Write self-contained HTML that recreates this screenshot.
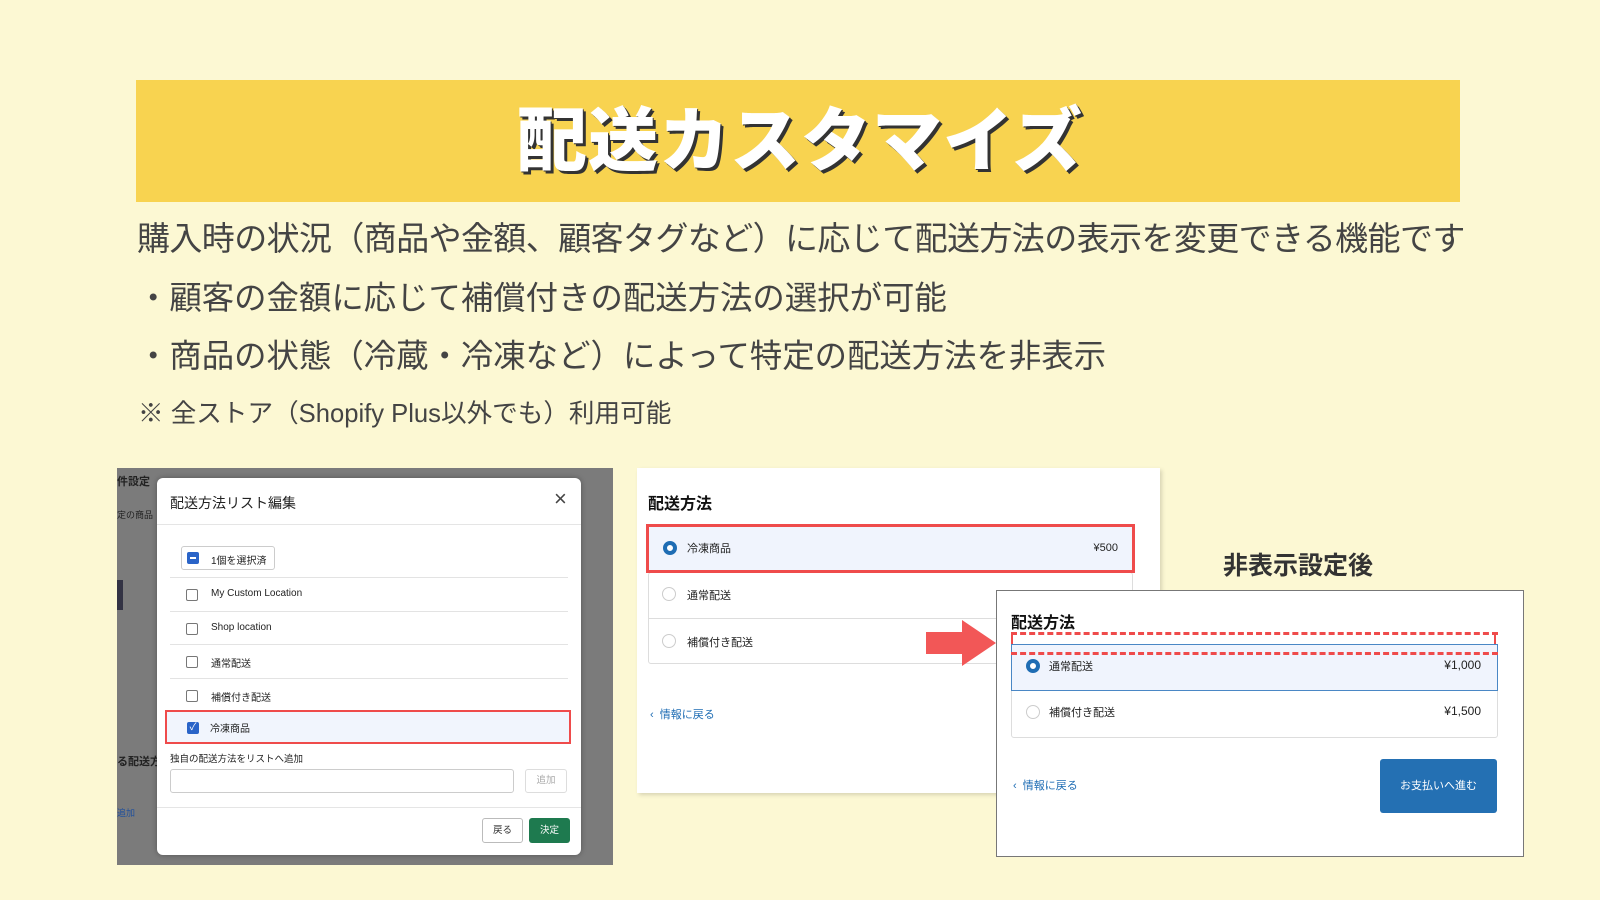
<!DOCTYPE html>
<html><head><meta charset="utf-8"><style>
*{margin:0;padding:0;box-sizing:border-box}
body{width:1600px;height:900px;background:#fcf8d3;position:relative;overflow:hidden;font-family:"Liberation Sans","Noto Sans CJK JP",sans-serif;color:#333}
.a{position:absolute;white-space:nowrap}
.band{left:136px;top:80px;width:1324px;height:122px;background:#f8d350}
.title{left:0;width:1600px;top:96px;text-align:center;font-size:70px;font-weight:900;color:#fff;text-shadow:3px 3px 0 #333,1px 1px 0 #333;letter-spacing:1px;line-height:90px}
.body{font-size:33px;color:#444;line-height:40px}
.cb{position:absolute;width:12px;height:12px;border:1.5px solid #777;border-radius:2px;background:#fff}
.row{position:absolute;left:170px;width:398px;height:34px;border-top:1px solid #e3e3e3;font-size:10px;color:#222}
.row span{position:absolute;left:41px;top:10px}
.row .cb{left:16px;top:11px}
.radio{position:absolute;width:14px;height:14px;border-radius:50%;border:1px solid #ccc;background:#fff}
.radio.on{border:4px solid #1f6db4}
.sm{font-size:11px;color:#222}
</style></head><body>
<div class="a band"></div>
<div class="a title">配送カスタマイズ</div>
<div class="a body" style="left:137px;top:219px;letter-spacing:-0.6px">購入時の状況（商品や金額、顧客タグなど）に応じて配送方法の表示を変更できる機能です</div>
<div class="a body" style="left:137px;top:278px;font-size:32.4px">・顧客の金額に応じて補償付きの配送方法の選択が可能</div>
<div class="a body" style="left:137px;top:336px;font-size:32.4px">・商品の状態（冷蔵・冷凍など）によって特定の配送方法を非表示</div>
<div class="a" style="left:138px;top:393px;font-size:25.6px;color:#444">※ 全ストア（Shopify Plus以外でも）利用可能</div>

<!-- left screenshot -->
<div class="a" style="left:117px;top:468px;width:496px;height:397px;background:#7b7b7b;overflow:hidden">
 <div class="a" style="left:0;top:5px;font-size:11px;font-weight:bold;color:#222">件設定</div>
 <div class="a" style="left:0;top:40px;font-size:9px;color:#222">定の商品</div>
 <div class="a" style="left:0;top:285px;font-size:11px;font-weight:bold;color:#222">る配送方</div>
 <div class="a" style="left:0;top:338px;font-size:9px;color:#1f4f9c">追加</div>
 <div class="a" style="left:0;top:112px;width:6px;height:30px;background:#334"></div>
</div>
<div class="a" style="left:157px;top:478px;width:424px;height:377px;background:#fff;border-radius:6px;box-shadow:0 0 6px rgba(0,0,0,.3)">
 <div class="a" style="left:13px;top:15px;font-size:14px;color:#222">配送方法リスト編集</div>
 <div class="a" style="left:397px;top:8px;font-size:22px;color:#444;font-weight:300">×</div>
 <div class="a" style="left:0;top:46px;width:424px;border-top:1px solid #e5e5e5"></div>
 <div class="a" style="left:24px;top:68px;width:94px;height:24px;border:1px solid #ccc;border-radius:3px;font-size:10px;color:#222">
  <div class="a" style="left:5px;top:5px;width:12px;height:12px;background:#2a64c8;border-radius:2px"><div class="a" style="left:3px;top:5px;width:6px;height:2px;background:#fff"></div></div>
  <span class="a" style="left:29px;top:5px">1個を選択済</span></div>
</div>
<div class="row" style="top:577px"><div class="cb"></div><span>My Custom Location</span></div>
<div class="row" style="top:611px"><div class="cb"></div><span>Shop location</span></div>
<div class="row" style="top:644px"><div class="cb"></div><span>通常配送</span></div>
<div class="row" style="top:678px"><div class="cb"></div><span>補償付き配送</span></div>
<div class="a" style="left:165px;top:710px;width:406px;height:34px;background:#f1f5fd;border:2.5px solid #ef4b4b;font-size:10px;color:#222">
 <div class="a" style="left:20px;top:10px;width:12px;height:12px;background:#2a64c8;border-radius:2px;color:#fff;font-size:10px;line-height:12px;text-align:center">✓</div>
 <span class="a" style="left:43px;top:8px">冷凍商品</span></div>
<div class="a" style="left:170px;top:751px;font-size:9.5px;color:#222">独自の配送方法をリストへ追加</div>
<div class="a" style="left:170px;top:769px;width:344px;height:24px;border:1px solid #ccc;border-radius:3px"></div>
<div class="a" style="left:525px;top:769px;width:42px;height:24px;border:1px solid #ddd;border-radius:3px;font-size:9.5px;color:#aaa;text-align:center;line-height:22px">追加</div>
<div class="a" style="left:157px;top:807px;width:424px;border-top:1px solid #e5e5e5"></div>
<div class="a" style="left:482px;top:818px;width:41px;height:25px;border:1px solid #bbb;border-radius:3px;font-size:9.5px;color:#333;text-align:center;line-height:23px">戻る</div>
<div class="a" style="left:529px;top:818px;width:41px;height:25px;background:#1e7a4f;border-radius:3px;font-size:9.5px;color:#fff;text-align:center;line-height:25px">決定</div>

<!-- middle panel -->
<div class="a" style="left:637px;top:468px;width:523px;height:325px;background:#fff;box-shadow:2px 2px 4px rgba(0,0,0,.15)">
 <div class="a" style="left:11px;top:22px;font-size:16px;font-weight:bold;color:#111">配送方法</div>
 <div class="a" style="left:11px;top:104px;width:485px;height:92px;border:1px solid #ddd;border-radius:3px"></div>
 <div class="a" style="left:11px;top:150px;width:485px;border-top:1px solid #ddd"></div>
 <div class="radio" style="left:25px;top:119px"></div><div class="a sm" style="left:50px;top:119px">通常配送</div>
 <div class="radio" style="left:25px;top:166px"></div><div class="a sm" style="left:50px;top:166px">補償付き配送</div>
 <div class="a" style="left:13px;top:238px;font-size:11px;color:#1f6db4">‹ &nbsp;情報に戻る</div>
</div>
<div class="a" style="left:646px;top:524px;width:489px;height:49px;background:#f0f4fd;border:3px solid #ef4b4b">
 <div class="radio on" style="left:14px;top:14px"></div>
 <div class="a sm" style="left:38px;top:13px">冷凍商品</div>
 <div class="a sm" style="right:14px;top:15px">¥500</div>
</div>
<div class="a" style="left:1223px;top:546px;font-size:25px;font-weight:bold;color:#333">非表示設定後</div>

<!-- arrow -->
<svg class="a" style="left:926px;top:620px" width="70" height="48"><path d="M0 12 H36 V0 L70 23 L36 46 V34 H0 Z" fill="#f25757"/></svg>

<!-- front panel -->
<div class="a" style="left:996px;top:590px;width:528px;height:267px;background:#fff;border:1px solid #777">
 <div class="a" style="left:14px;top:18px;font-size:16px;font-weight:bold;color:#111">配送方法</div>
 <div class="a" style="left:14px;top:53px;width:487px;height:94px;border:1px solid #ddd;border-radius:3px"></div>
 <div class="a" style="left:14px;top:53px;width:487px;height:47px;background:#f0f4fd;border:1.5px solid #4a87c5"></div>
 <div class="radio on" style="left:29px;top:68px"></div><div class="a sm" style="left:52px;top:67px">通常配送</div>
 <div class="a sm" style="right:42px;top:67px;font-size:12px">¥1,000</div>
 <div class="radio" style="left:29px;top:114px"></div><div class="a sm" style="left:52px;top:113px">補償付き配送</div>
 <div class="a sm" style="right:42px;top:113px;font-size:12px">¥1,500</div>
 <div class="a" style="left:14px;top:41px;width:487px;border-top:3px dashed #ef4b4b"></div>
 <div class="a" style="left:14px;top:61px;width:487px;border-top:3px dashed #ef4b4b"></div>
 <div class="a" style="left:14px;top:41px;height:12px;border-left:2px solid #ef4b4b"></div>
 <div class="a" style="left:497px;top:41px;height:12px;border-left:2px solid #ef4b4b"></div>
 <div class="a" style="left:16px;top:186px;font-size:11px;color:#1f6db4">‹ &nbsp;情報に戻る</div>
 <div class="a" style="left:383px;top:168px;width:117px;height:54px;background:#2470b3;border-radius:3px;color:#fff;font-size:11px;text-align:center;line-height:54px">お支払いへ進む</div>
</div>
</body></html>
